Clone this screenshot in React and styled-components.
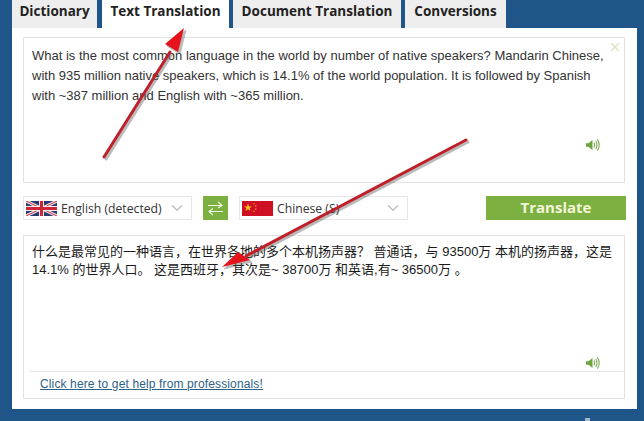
import React from "react";
import styled, { createGlobalStyle } from "styled-components";
import { ChevronDown } from "lucide-react";

const GlobalStyle = createGlobalStyle`
    html, body {
        margin: 0;
        padding: 0;
        background: #1f5588;
    }
`;

const Page = styled.div`
    position: relative;
    width: 644px;
    height: 421px;
    overflow: hidden;
    background: #1f5588;
    font-family: "Liberation Sans", Arial, sans-serif;
    color: #333;
`;

const Tabs = styled.ul`
    display: flex;
    height: 28px;
    margin: 0;
    padding: 0 0 0 12px;
    list-style: none;
`;

const Tab = styled.li`
    width: ${props => props.width}px;
    margin-right: ${props => props.gap}px;
    padding-top: 2px;
    box-sizing: border-box;
    text-align: center;
    font-family: "Open Sans", "Liberation Sans", sans-serif;
    font-size: 13.5px;
    font-weight: 700;
    line-height: 18px;
    color: #222;
    background: ${props => (props.$active ? "#fff" : "#eeeeee")};
`;

const Panel = styled.main`
    width: 625px;
    height: 381px;
    margin-left: 12px;
    padding: 9px 12px 0 11px;
    box-sizing: border-box;
    background: #fff;
`;

const SourceBox = styled.section`
    position: relative;
    height: 146px;
    padding: 8px 16px 8px 8px;
    box-sizing: border-box;
    border: 1px solid #e2e2e2;
    font-size: 13px;
    line-height: 20px;
`;

const Paragraph = styled.p`
    margin: 0;
`;

const CloseMark = styled.svg`
    position: absolute;
    top: 4px;
    right: 4px;
    width: 10px;
    height: 10px;
`;

const Speaker = styled.svg`
    position: absolute;
    right: 24px;
    bottom: ${props => props.bottom}px;
    width: 15px;
    height: 14px;
`;

const Controls = styled.div`
    display: flex;
    align-items: stretch;
    height: 24px;
    margin: 13px 0 15px;
`;

const LangSelect = styled.div`
    display: flex;
    align-items: center;
    width: 169px;
    padding: 0 4px 0 2px;
    box-sizing: border-box;
    border: 1px solid #e6e6e6;
    font-family: "Open Sans", "Liberation Sans", sans-serif;
    font-size: 12.2px;
    color: #333;
`;

const LangName = styled.span`
    flex: 1;
    margin-left: 4px;
    white-space: nowrap;
`;

const Flag = styled.svg`
    width: 31px;
    height: 15px;
    flex: none;
`;

const Arrow = styled(ChevronDown)`
    width: 18px;
    height: 18px;
    margin-right: 1px;
    color: #bcc2c4;
`;

const SwapButton = styled.button`
    display: flex;
    align-items: center;
    justify-content: center;
    width: 25px;
    margin: 0 11px;
    padding: 0;
    border: 0;
    background: #7cb041;
`;

const TranslateButton = styled.button`
    width: 140px;
    margin-left: auto;
    margin-right: -1px;
    padding: 0 0 2px;
    border: 0;
    background: #7cb041;
    color: #f3f6d8;
    font-family: "Open Sans", "Liberation Sans", sans-serif;
    font-size: 15px;
    font-weight: 700;
`;

const ResultBox = styled.section`
    position: relative;
    display: flex;
    flex-direction: column;
    height: 164px;
    box-sizing: border-box;
    border: 1px solid #e2e2e2;
`;

const ResultText = styled.p`
    flex: 1;
    margin: 0;
    padding: 7px 8px;
    font-family: "Liberation Sans", "Noto Sans CJK SC", sans-serif;
    font-size: 13px;
    line-height: 18px;
    color: #1a1a1a;
`;

const HelpRow = styled.div`
    height: 27px;
    margin-left: 5px;
    padding: 2px 0 0 11px;
    box-sizing: border-box;
    border-top: 1px solid #e6e6e6;
    line-height: 18px;
`;

const HelpLink = styled.a`
    font-size: 12px;
    letter-spacing: 0.13px;
    color: #2e6187;
    text-decoration: underline;
`;

const Annotations = styled.svg`
    position: absolute;
    inset: 0;
    width: 644px;
    height: 421px;
    pointer-events: none;
`;

const Speck = styled.span`
    position: absolute;
    left: 585px;
    top: 418px;
    width: 5px;
    height: 3px;
    background: #9fb6cc;
`;

const SpeakerIcon = ({ bottom }) => (
    <Speaker bottom={bottom} viewBox="0 0 15 14" fill="none">
        <path d="M1 5.2h2.5L7.5 2v10L3.5 8.8H1z" fill="#6fa33e" />
        <path d="M8.9 4.6q1.6 2.4 0 4.8M10.7 3q2.6 4 0 8M12.4 1.4q3.6 5.6 0 11.2" stroke="#80ab55" strokeWidth="1.1" />
    </Speaker>
);

const UkFlag = () => (
    <Flag viewBox="0 0 31 15">
        <rect width="31" height="15" fill="#2b3a6e" />
        <path d="M0 0l31 15M31 0L0 15" stroke="#f2eef0" strokeWidth="3" />
        <path d="M0 0l31 15M31 0L0 15" stroke="#c8283c" strokeWidth="1" />
        <path d="M15.5 0v15M0 7.5h31" stroke="#f2eef0" strokeWidth="5" />
        <path d="M15.5 0v15M0 7.5h31" stroke="#cf2336" strokeWidth="3" />
    </Flag>
);

const ChinaFlag = () => (
    <Flag viewBox="0 0 31 15">
        <rect width="31" height="15" fill="#cf0f24" />
        <path d="M6 2.6l1 2.8h3l-2.4 1.7.9 2.8L6 8.2 3.5 9.9l.9-2.8L2 5.4h3z" fill="#f5c518" />
        <g fill="#eeb31f">
            <circle cx="12" cy="2.8" r=".7" />
            <circle cx="13.8" cy="5" r=".7" />
            <circle cx="13.8" cy="8" r=".7" />
            <circle cx="12" cy="10.2" r=".7" />
        </g>
    </Flag>
);

const App = () => {
    return (
        <Page>
            <GlobalStyle />
            <Tabs>
                <Tab width={85} gap={5}>Dictionary</Tab>
                <Tab width={127} gap={4} $active>Text Translation</Tab>
                <Tab width={168} gap={4}>Document Translation</Tab>
                <Tab width={101} gap={0}>Conversions</Tab>
            </Tabs>
            <Panel>
                <SourceBox>
                    <Paragraph>
                        What is the most common language in the world by number of native speakers? Mandarin Chinese,
                        with 935 million native speakers, which is 14.1% of the world population. It is followed by Spanish
                        with ~387 million and English with ~365 million.
                    </Paragraph>
                    <CloseMark viewBox="0 0 10 10">
                        <path d="M1 1l8 8M9 1l-8 8" stroke="#dfe3c8" strokeWidth="1.6" />
                    </CloseMark>
                    <SpeakerIcon bottom={30} />
                </SourceBox>
                <Controls>
                    <LangSelect>
                        <UkFlag />
                        <LangName>English (detected)</LangName>
                        <Arrow />
                    </LangSelect>
                    <SwapButton aria-label="Swap languages">
                        <svg width="17" height="15" viewBox="0 0 17 15" fill="none" stroke="#eef5e0" strokeWidth="1.2">
                            <path d="M1 4.5h14M11 1l4 3.5L11 7" />
                            <path d="M16 10.5H2M6 7.5l-4 3 4 3.5" />
                        </svg>
                    </SwapButton>
                    <LangSelect>
                        <ChinaFlag />
                        <LangName>Chinese (S)</LangName>
                        <Arrow />
                    </LangSelect>
                    <TranslateButton>Translate</TranslateButton>
                </Controls>
                <ResultBox>
                    <ResultText>
                        什么是最常见的一种语言，在世界各地的多个本机扬声器？ 普通话，与 93500万 本机的扬声器，这是
                        14.1% 的世界人口。 这是西班牙，其次是~ 38700万 和英语,有~ 36500万 。
                    </ResultText>
                    <HelpRow>
                        <HelpLink href="#">Click here to get help from professionals!</HelpLink>
                    </HelpRow>
                    <SpeakerIcon bottom={28} />
                </ResultBox>
            </Panel>
            <Speck />
            <Annotations viewBox="0 0 644 421">
                <g opacity="0.4" transform="translate(2 2)" fill="#555" stroke="#555">
                    <path d="M104 157L170 52" strokeWidth="3" strokeLinecap="round" />
                    <path d="M184 28L165 44L178 52z" />
                    <path d="M466 140L246 256" strokeWidth="3" strokeLinecap="round" />
                    <path d="M222 267L238 252L250 260z" />
                </g>
                <path d="M104 157L170 52" stroke="#bd2029" strokeWidth="3" strokeLinecap="round" />
                <path d="M466 140L246 256" stroke="#bd2029" strokeWidth="3" strokeLinecap="round" />
                <path d="M184 28L165 44L178 52z" fill="#e5141c" />
                <path d="M222 267L238 252L250 260z" fill="#e5141c" />
            </Annotations>
        </Page>
    );
};

export default App;
